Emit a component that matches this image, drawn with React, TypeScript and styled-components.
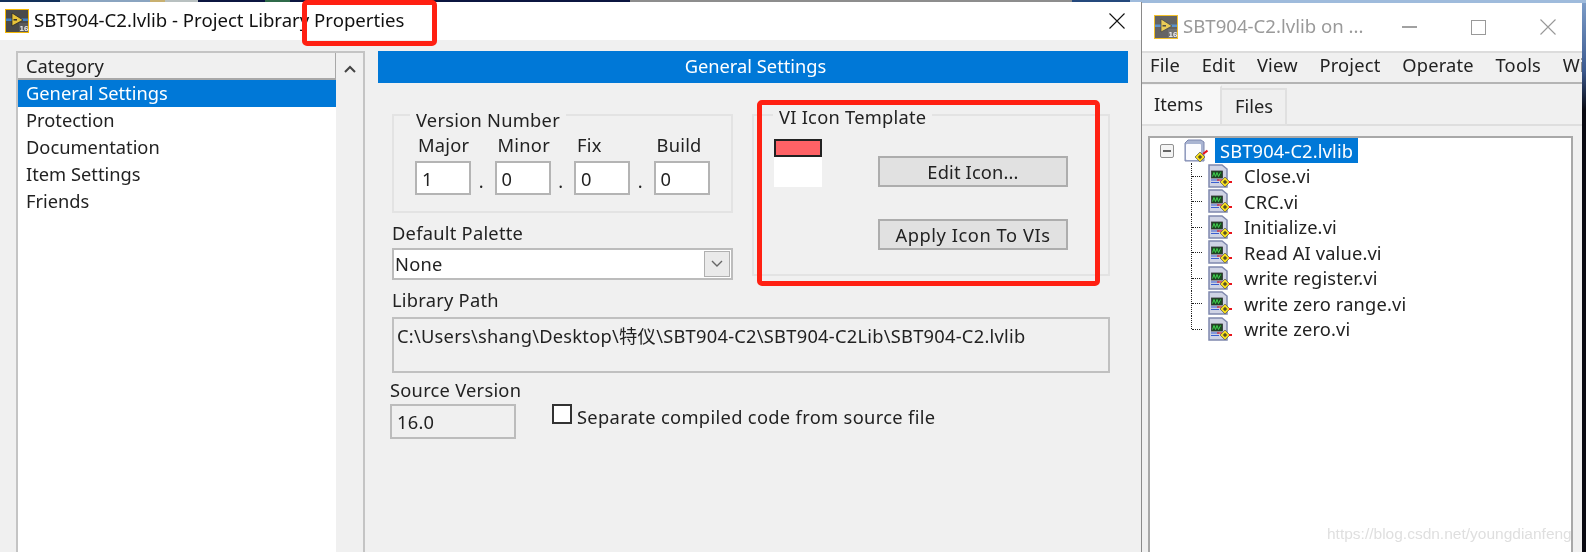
import React from 'react'
import styled, { createGlobalStyle } from 'styled-components'

const GlobalStyle = createGlobalStyle`
  html, body {
    margin: 0;
    padding: 0;
    background: #0a1238;
  }
  * {
    box-sizing: border-box;
  }
`

const uiFont = `"Noto Sans", "Noto Sans CJK SC", sans-serif`

const Desktop = styled.div`
  position: relative;
  display: flex;
  align-items: flex-start;
  width: 1586px;
  height: 552px;
  padding-top: 2px;
  overflow: hidden;
  font-family: ${uiFont};
  font-size: 18.3px;
  color: #222;
  filter: blur(0.45px);
  background:
    linear-gradient(
        90deg,
        #12305a 0 60px,
        #8aa4c0 60px 150px,
        #c8b070 150px 165px,
        #b8c0c0 165px 198px,
        #0b1540 198px 265px,
        #2f6a4a 265px 290px,
        #0b1540 290px 630px,
        #8d8d8d 630px 1072px,
        #24487c 1072px 1130px,
        #9fbbdc 1130px 1586px
      )
      top / 100% 3px no-repeat,
    linear-gradient(180deg, #7f9fca 0, #3c5a90 70px, #0a0a12 110px);
`

const Markup = styled.div<{ $left: number; $top: number; $width: number; $height: number }>`
  position: absolute;
  left: ${p => p.$left}px;
  top: ${p => p.$top}px;
  width: ${p => p.$width}px;
  height: ${p => p.$height}px;
  border: 5px solid #ff2012;
  border-radius: 5px;
`

const Watermark = styled.div`
  position: absolute;
  left: 1327px;
  top: 525px;
  font-family: "Liberation Sans", sans-serif;
  font-size: 15.5px;
  line-height: 18px;
  color: #dfdfdf;
`

/* main properties dialog */
const Dialog = styled.div`
  flex: none;
  width: 1142px;
  height: 550px;
  background: #f0f0f0;
  border-right: 1px solid #8a8a8a;
`

const TitleBar = styled.div`
  display: flex;
  align-items: center;
  height: 38px;
  padding: 0 16px 0 5px;
  background: #fff;
  color: #111;
`

const TitleText = styled.span<{ $dim?: boolean }>`
  margin-left: 5px;
  flex: 1;
  font-size: 18.6px;
  line-height: 22px;
  padding-bottom: 2px;
  white-space: nowrap;
  color: ${p => (p.$dim ? '#9a9a9a' : '#111')};
`

const DialogBody = styled.div`
  display: flex;
  gap: 13px;
  height: 512px;
  padding: 11px 13px 0 16px;
`

const CategoryPanel = styled.div`
  display: flex;
  flex: none;
  width: 349px;
  border: 2px solid #c4c4c4;
  border-bottom: none;
  background: #fff;
`

const CategoryList = styled.div`
  flex: 1;
`

const CategoryHeader = styled.div`
  height: 27px;
  padding-left: 8px;
  line-height: 26px;
  background: #f0f0f0;
  border-right: 1px solid #a8a8a8;
  border-bottom: 2px solid #a8a8a8;
`

const CategoryRow = styled.div<{ $selected?: boolean }>`
  height: 27px;
  padding-left: 8px;
  line-height: 26px;
  background: ${p => (p.$selected ? '#0078d7' : 'transparent')};
  color: ${p => (p.$selected ? '#fff' : '#222')};
`

const ScrollTrack = styled.div`
  display: flex;
  justify-content: center;
  flex: none;
  width: 27px;
  padding-top: 12px;
  background: #f0f0f0;
`

const Content = styled.div`
  flex: 1;
  min-width: 0;
`

const Banner = styled.div`
  height: 32px;
  padding-left: 5px;
  line-height: 29px;
  text-align: center;
  color: #fff;
  background: #0078d7;
`

const Form = styled.div`
  padding: 22px 18px 0 14px;
  letter-spacing: 0.25px;
`

const TopGrid = styled.div`
  display: grid;
  grid-template-columns: 341px 358px;
  column-gap: 19px;
`

const Group = styled.fieldset<{ $height: number }>`
  margin: 0;
  padding: 0;
  min-width: 0;
  height: ${p => p.$height}px;
  border: 2px solid #e3e3e3;
`

const GroupTitle = styled.legend<{ $indent: number; $drop: number }>`
  margin-left: ${p => p.$indent}px;
  padding: 0 6px;
  height: 20px;
  line-height: ${p => 20 + p.$drop * 2}px;
`

const VersionGrid = styled.div`
  display: flex;
  padding: 7px 0 0 21px;
  gap: 23.5px;
`

const VersionField = styled.div`
  position: relative;
  width: 56px;
`

const FieldLabel = styled.div`
  height: 29px;
  padding-left: 3px;
  line-height: 25px;
`

const NumberBox = styled.div`
  height: 34px;
  padding-left: 5px;
  line-height: 32px;
  background: #fff;
  border: 2px solid #b4b4b4;
`

const Separator = styled.span`
  position: absolute;
  right: -13px;
  bottom: 0;
  line-height: 28px;
`

const PaletteBlock = styled.div`
  margin-top: 10px;
`

const PlainLabel = styled.div`
  height: 25px;
  line-height: 19px;
`

const Select = styled.div`
  display: flex;
  justify-content: space-between;
  align-items: center;
  height: 32px;
  padding: 0 1px 2px 1px;
  background: #fff;
  border: 2px solid #bcbcbc;
`

const SelectArrow = styled.div`
  display: flex;
  align-items: center;
  justify-content: center;
  width: 26px;
  height: 26px;
  margin-bottom: -2px;
  background: #eaeaea;
  border: 1px solid #b0b0b0;
`

const IconGroupBody = styled.div`
  display: flex;
  padding: 0 0 0 20px;
`

const IconPreview = styled.div`
  flex: none;
  width: 48px;
  height: 48px;
  margin-top: 14px;
  background: #fff;
`

const IconBanner = styled.div`
  height: 18px;
  background: #ff6266;
  border: 2px solid #222;
`

const ButtonColumn = styled.div`
  display: flex;
  flex-direction: column;
  gap: 32px;
  margin: 31px 0 0 56px;
`

const ActionButton = styled.div<{ $spacing: number }>`
  width: 190px;
  height: 31px;
  line-height: 27px;
  text-align: center;
  letter-spacing: ${p => p.$spacing}px;
  background: #e1e1e1;
  border: 2px solid #adadad;
`

const PathLabel = styled.div`
  height: 28px;
  margin-top: 9px;
  line-height: 22px;
`

const PathBox = styled.div`
  height: 56px;
  padding: 4px 0 0 3px;
  line-height: 26px;
  white-space: nowrap;
  border: 2px solid #c0c0c0;
`

const VersionLabel = styled.div`
  height: 25px;
  margin: 5px 0 0 -2px;
  line-height: 23px;
`

const SourceRow = styled.div`
  display: flex;
  align-items: flex-start;
  margin: 1px 0 0 -2px;
`

const ReadonlyBox = styled.div`
  flex: none;
  width: 126px;
  height: 35px;
  padding-left: 5px;
  line-height: 31px;
  border: 2px solid #bcbcbc;
`

const CheckBox = styled.div`
  flex: none;
  width: 20px;
  height: 20px;
  margin-left: 36px;
  background: #fff;
  border: 2px solid #333;
`

const CheckLabel = styled.span`
  margin-left: 5px;
  line-height: 26px;
  letter-spacing: 0.33px;
`

/* project explorer window behind it */
const Explorer = styled.div`
  flex: none;
  width: 440px;
  height: 550px;
  margin-top: 1px;
  background: #f0f0f0;
`

const ExplorerTitle = styled.div`
  display: flex;
  align-items: center;
  height: 50px;
  padding-left: 12px;
  background: #fff;
  border-bottom: 2px solid #dcdcdc;
`

const WindowControls = styled.div`
  display: flex;
  align-items: center;
  gap: 54px;
  padding-right: 26px;
`

const MenuBar = styled.div`
  display: flex;
  gap: 21.7px;
  height: 31px;
  padding-left: 8px;
  overflow: hidden;
  line-height: 24px;
  letter-spacing: 0.2px;
  white-space: nowrap;
  border-bottom: 2px solid #b4b4b4;
`

const TabStrip = styled.div`
  display: flex;
  align-items: flex-end;
  height: 42px;
  border-bottom: 2px solid #dedede;
`

const Tab = styled.div<{ $active?: boolean }>`
  height: ${p => (p.$active ? 41 : 38)}px;
  width: ${p => (p.$active ? 80 : 65)}px;
  margin-bottom: -2px;
  padding-left: ${p => (p.$active ? 12 : 13)}px;
  line-height: ${p => (p.$active ? 34 : 31)}px;
  background: ${p => (p.$active ? '#f7f7f7' : '#efefef')};
  border: 2px solid #e0e0e0;
  border-left: none;
  border-top-color: ${p => (p.$active ? '#f7f7f7' : '#e0e0e0')};
`

const TreeFrame = styled.div`
  height: 417px;
  margin: 10px 9px 0 6px;
  padding: 0 0 0 10px;
  background: #fff;
  border: 2px solid #a8a8a8;
  border-bottom: none;
`

const RootRow = styled.div`
  display: flex;
  align-items: center;
  height: 25px;
`

const Expander = styled.div`
  display: flex;
  align-items: center;
  justify-content: center;
  flex: none;
  width: 14px;
  height: 14px;
  margin-right: 10px;
  background: #f4f4f4;
  border: 1px solid #909090;
  border-radius: 2px;
`

const ExpanderBar = styled.div`
  width: 8px;
  height: 2px;
  background: #666;
`

const RootLabel = styled.span`
  margin-left: 7px;
  padding: 0 5px 0 5px;
  line-height: 25px;
  letter-spacing: 0.15px;
  color: #fff;
  background: #0078d7;
`

const TreeRow = styled.div`
  display: flex;
  align-items: center;
  height: 25.5px;
  padding-left: 31px;
`

const Connector = styled.div<{ $last?: boolean }>`
  position: relative;
  flex: none;
  align-self: stretch;
  width: 17px;

  &::before {
    content: '';
    position: absolute;
    left: 0;
    top: 0;
    height: ${p => (p.$last ? '50%' : '100%')};
    border-left: 1px dotted #222;
  }

  &::after {
    content: '';
    position: absolute;
    left: 1px;
    top: 50%;
    width: 10px;
    border-top: 1px dotted #222;
  }
`

const TreeLabel = styled.span`
  margin-left: 12px;
  letter-spacing: 0.15px;
  white-space: nowrap;
`

function LabviewIcon({ dim }: { dim?: boolean }) {
  return (
    <svg width="24" height="24" viewBox="0 0 24 24" style={{ flex: 'none', opacity: dim ? 0.85 : 1 }}>
      <rect x="0.5" y="0.5" width="23" height="23" fill="#4a4a4a" stroke="#f2b705" />
      <rect x="1" y="9.5" width="22" height="2.5" fill="#3f7fc4" />
      <path d="M7 4 L18 11 L7 17 Z" fill="#e8c33a" stroke="#222" strokeWidth="0.7" />
      <path d="M8.5 10.8 H12" stroke="#222" strokeWidth="1.4" />
      <rect x="14" y="14" width="9" height="9" fill="#5a5a5a" />
      <text x="14.6" y="22" fontSize="8" fontWeight="700" fontFamily="Liberation Sans" fill="#eee">16</text>
    </svg>
  )
}

function LibraryIcon() {
  return (
    <svg width="24" height="24" viewBox="0 0 24 24" style={{ flex: 'none' }}>
      <path d="M1 4 L4 1 H17 L20 3 V22 H1 Z" fill="#a9b4d2" stroke="#7c86ae" />
      <rect x="2" y="5" width="15" height="16" rx="1" fill="#fbfbff" />
      <path d="M11 18 L16 13 L21 18 L16 23 Z" fill="#f4dc1e" stroke="#555" strokeWidth="0.7" />
      <path d="M14 18 H18 M16 16 V20" stroke="#222" strokeWidth="1" />
      <path d="M19 15 L23.5 11.5" stroke="#e8141c" strokeWidth="2" />
    </svg>
  )
}

function ViIcon() {
  return (
    <svg width="24" height="24" viewBox="0 0 24 24" style={{ flex: 'none' }}>
      <path d="M1 1 H14 L19 5 V23 H1 Z" fill="#cfd3e4" stroke="#7f88ad" strokeWidth="1.5" />
      <rect x="3.5" y="7" width="11" height="7" fill="#1d4a22" stroke="#333" strokeWidth="0.8" />
      <path d="M4.5 12.5 L6 8.5 L7.5 12.5 L9 8.5 L10.5 12.5 L12.5 8.5" stroke="#3fd34f" strokeWidth="1" fill="none" />
      <path d="M3 16 H11 M3 18.5 H11" stroke="#3a5fd0" strokeWidth="1.2" />
      <path d="M9 16 H14" stroke="#e02020" strokeWidth="1.2" />
      <path d="M12 18 L17 13 L22 18 L17 23 Z" fill="#f4dc1e" stroke="#555" strokeWidth="0.7" />
      <path d="M15 18 H19 M17 16 V20" stroke="#222" strokeWidth="1" />
      <path d="M21 18 H24" stroke="#e8141c" strokeWidth="2" />
    </svg>
  )
}

function CloseGlyph({ color }: { color: string }) {
  return (
    <svg width="16" height="16" viewBox="0 0 16 16" style={{ flex: 'none' }}>
      <path d="M0.5 0.5 L15.5 15.5 M15.5 0.5 L0.5 15.5" stroke={color} strokeWidth="1.1" />
    </svg>
  )
}

function Chevron({ up }: { up?: boolean }) {
  return (
    <svg width="12" height="8" viewBox="0 0 12 8">
      <path d={up ? 'M1 7 L6 2 L11 7' : 'M1 1 L6 6 L11 1'} fill="none" stroke={up ? '#444' : '#666'} strokeWidth={up ? 2 : 1.4} />
    </svg>
  )
}

const categories = ['Protection', 'Documentation', 'Item Settings', 'Friends']
const versionParts = [
  { label: 'Major', value: '1' },
  { label: 'Minor', value: '0' },
  { label: 'Fix', value: '0' },
  { label: 'Build', value: '0' },
]
const menus = ['File', 'Edit', 'View', 'Project', 'Operate', 'Tools', 'Window']
const libraryItems = [
  'Close.vi',
  'CRC.vi',
  'Initialize.vi',
  'Read AI value.vi',
  'write register.vi',
  'write zero range.vi',
  'write zero.vi',
]

export default function App() {
  return (
    <Desktop>
      <GlobalStyle />
      <Dialog>
        <TitleBar>
          <LabviewIcon />
          <TitleText>SBT904-C2.lvlib - Project Library Properties</TitleText>
          <CloseGlyph color="#111" />
        </TitleBar>
        <DialogBody>
          <CategoryPanel>
            <CategoryList>
              <CategoryHeader>Category</CategoryHeader>
              <CategoryRow $selected>General Settings</CategoryRow>
              {categories.map(name => (
                <CategoryRow key={name}>{name}</CategoryRow>
              ))}
            </CategoryList>
            <ScrollTrack>
              <Chevron up />
            </ScrollTrack>
          </CategoryPanel>
          <Content>
            <Banner>General Settings</Banner>
            <Form>
              <TopGrid>
                <div>
                  <Group $height={108}>
                    <GroupTitle $indent={16} $drop={5}>Version Number</GroupTitle>
                    <VersionGrid>
                      {versionParts.map((part, index) => (
                        <VersionField key={part.label}>
                          <FieldLabel>{part.label}</FieldLabel>
                          <NumberBox>{part.value}</NumberBox>
                          {index < 3 && <Separator>.</Separator>}
                        </VersionField>
                      ))}
                    </VersionGrid>
                  </Group>
                  <PaletteBlock>
                    <PlainLabel>Default Palette</PlainLabel>
                    <Select>
                      None
                      <SelectArrow>
                        <Chevron />
                      </SelectArrow>
                    </Select>
                  </PaletteBlock>
                </div>
                <Group $height={171}>
                  <GroupTitle $indent={19} $drop={2}>VI Icon Template</GroupTitle>
                  <IconGroupBody>
                    <IconPreview>
                      <IconBanner />
                    </IconPreview>
                    <ButtonColumn>
                      <ActionButton $spacing={0.15}>Edit Icon...</ActionButton>
                      <ActionButton $spacing={0.55}>Apply Icon To VIs</ActionButton>
                    </ButtonColumn>
                  </IconGroupBody>
                </Group>
              </TopGrid>
              <PathLabel>Library Path</PathLabel>
              <PathBox>C:\Users\shang\Desktop\特仪\SBT904-C2\SBT904-C2Lib\SBT904-C2.lvlib</PathBox>
              <VersionLabel>Source Version</VersionLabel>
              <SourceRow>
                <ReadonlyBox>16.0</ReadonlyBox>
                <CheckBox />
                <CheckLabel>Separate compiled code from source file</CheckLabel>
              </SourceRow>
            </Form>
          </Content>
        </DialogBody>
      </Dialog>
      <Explorer>
        <ExplorerTitle>
          <LabviewIcon dim />
          <TitleText $dim>SBT904-C2.lvlib on ...</TitleText>
          <WindowControls>
            <svg width="15" height="2" viewBox="0 0 15 2">
              <path d="M0 1 H15" stroke="#8a8a8a" strokeWidth="1.6" />
            </svg>
            <svg width="15" height="15" viewBox="0 0 15 15">
              <rect x="0.5" y="0.5" width="14" height="14" fill="none" stroke="#999" />
            </svg>
            <CloseGlyph color="#999" />
          </WindowControls>
        </ExplorerTitle>
        <MenuBar>
          {menus.map(name => (
            <span key={name}>{name}</span>
          ))}
        </MenuBar>
        <TabStrip>
          <Tab $active>Items</Tab>
          <Tab>Files</Tab>
        </TabStrip>
        <TreeFrame>
          <RootRow>
            <Expander>
              <ExpanderBar />
            </Expander>
            <LibraryIcon />
            <RootLabel>SBT904-C2.lvlib</RootLabel>
          </RootRow>
          {libraryItems.map((name, index) => (
            <TreeRow key={name}>
              <Connector $last={index === libraryItems.length - 1} />
              <ViIcon />
              <TreeLabel>{name}</TreeLabel>
            </TreeRow>
          ))}
        </TreeFrame>
      </Explorer>
      <Markup $left={302} $top={0} $width={135} $height={46} />
      <Markup $left={757} $top={100} $width={343} $height={186} />
      <Watermark>https://blog.csdn.net/youngdianfeng</Watermark>
    </Desktop>
  )
}
